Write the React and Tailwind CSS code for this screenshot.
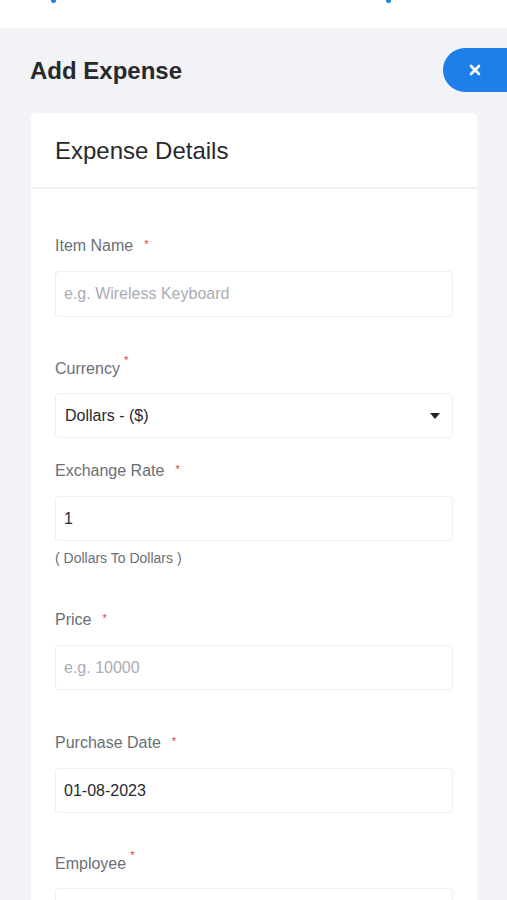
import React from 'react';

const Label = ({ text, sup }) => (
  <label className="block text-[16px] leading-[20px] text-[#6b6f77]">
    {text}
    {sup ? (
      <sup className="relative -top-[10px] ml-[4px] text-[11px] text-[#e53935]">*</sup>
    ) : (
      <span className="ml-[11px] relative -top-[3px] text-[11px] text-[#e53935]">*</span>
    )}
  </label>
);

const Input = ({ placeholder, value, tall }) => (
  <div className={`mt-[14px] ${tall ? 'h-[46px]' : 'h-[45px]'} w-full rounded-[4px] border border-[#eceef1] bg-white px-[8px] flex items-center text-[16px]`}>
    {value ? (
      <span className="text-[#28292d]">{value}</span>
    ) : (
      <span className="text-[#a9adb4]">{placeholder}</span>
    )}
  </div>
);

const App = () => {
  return (
    <div className="min-h-[900px] w-[507px] overflow-hidden bg-[#f1f3f6] font-['Liberation_Sans',Arial,sans-serif]">
      {/* top bar */}
      <div className="h-[28px] bg-white flex items-start">
        <span className="ml-[51px] h-[3px] w-[5px] rounded-b-full bg-[#1d7fe8]" />
        <span className="ml-[330px] h-[3px] w-[5px] rounded-b-full bg-[#1d7fe8]" />
      </div>

      {/* heading */}
      <div className="mt-[20px] h-[44px] flex items-center justify-between">
        <h1 className="ml-[30px] pt-[2px] text-[24px] font-bold leading-[42px] text-[#28292d]">Add Expense</h1>
        <button className="h-[44px] w-[64px] rounded-l-full bg-[#1d7fe8] flex items-center justify-center">
          <svg width="12" height="12" viewBox="0 0 12 12">
            <path d="M2 2 L10 10 M10 2 L2 10" stroke="white" strokeWidth="2.6" strokeLinecap="round" />
          </svg>
        </button>
      </div>

      {/* card */}
      <div className="ml-[31px] mt-[21px] w-[446px] rounded-t-[5px] bg-white">
        <div className="h-[76px] border-b-2 border-[#eef0f3] px-[24px] flex items-center">
          <h2 className="text-[24px] text-[#28292d] pt-[1px]">Expense Details</h2>
        </div>
        <div className="px-[24px] pt-[47px] pb-[40px]">
          <div>
            <Label text="Item Name" />
            <Input placeholder="e.g. Wireless Keyboard" tall />
          </div>

          <div className="mt-[42px]">
            <Label text="Currency" sup />
            <div className="mt-[14px] h-[45px] w-full rounded-[4px] border border-[#eceef1] bg-white pl-[9px] pr-[12px] flex items-center justify-between text-[16px] text-[#28292d]">
              <span>Dollars - ($)</span>
              <svg width="10" height="6" viewBox="0 0 10 6">
                <path d="M0 0 L10 0 L5 6 Z" fill="#222" />
              </svg>
            </div>
          </div>

          <div className="mt-[23px]">
            <Label text="Exchange Rate" />
            <Input value="1" />
            <p className="mt-[9px] text-[14px] leading-[16px] text-[#6b6f77]">( Dollars To Dollars )</p>
          </div>

          <div className="mt-[44px]">
            <Label text="Price" />
            <Input placeholder="e.g. 10000" />
          </div>

          <div className="mt-[43px]">
            <Label text="Purchase Date" />
            <Input value="01-08-2023" />
          </div>

          <div className="mt-[41px]">
            <Label text="Employee" sup />
            <Input placeholder="" />
          </div>
        </div>
      </div>
    </div>
  );
};

export default App;
